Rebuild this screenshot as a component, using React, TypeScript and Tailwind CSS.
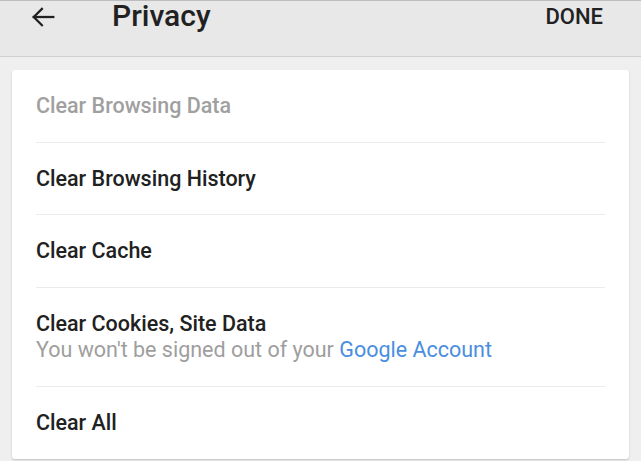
import React from "react";

function Row({ children, divider = true, h }: { children: React.ReactNode; divider?: boolean; h: string }) {
  return (
    <div className={`${h} flex flex-col justify-center mx-[24px] ${divider ? "border-b border-[#ebebeb]" : ""}`}>
      {children}
    </div>
  );
}

export default function App() {
  return (
    <div
      className="w-[641px] h-[461px] bg-[#efefef] overflow-hidden"
      style={{ fontFamily: "Roboto, 'Noto Sans', sans-serif" }}
    >
      <div className="h-[57px] bg-[#e8e8e8] border-t border-[#bdbdbd] border-b border-b-[#d0d0d0] flex items-start">
        <div className="w-[112px] flex pl-[30px] pt-[3px]">
          <svg width="26" height="26" viewBox="0 0 24 24" fill="none" stroke="#212121" strokeWidth="2.1" strokeLinecap="square">
            <path d="M21.5 12H3.5" />
            <path d="M11 4.5L3.5 12L11 19.5" />
          </svg>
        </div>
        <div className="text-[30px] font-medium text-[#212121] leading-[30px]">Privacy</div>
        <div className="ml-auto mr-[38px] text-[22px] font-medium text-[#212121] leading-none pt-[5px]">DONE</div>
      </div>
      <div className="mx-[12px] mt-[13px] h-[389px] bg-white rounded-[3px] shadow-[0_1px_2px_rgba(0,0,0,0.2)]">
        <Row h="h-[73px]">
          <div className="text-[21.5px] font-medium text-[#a0a0a0] leading-none">Clear Browsing Data</div>
        </Row>
        <Row h="h-[72px]">
          <div className="text-[21.5px] font-medium text-[#212121] leading-none">Clear Browsing History</div>
        </Row>
        <Row h="h-[73px]">
          <div className="text-[21.5px] font-medium text-[#212121] leading-none">Clear Cache</div>
        </Row>
        <Row h="h-[99px]">
          <div className="text-[21.5px] font-medium text-[#212121] leading-[26px]">Clear Cookies, Site Data</div>
          <div className="text-[21.5px] text-[#9e9e9e] leading-[26px]">
            You won't be signed out of your <span className="text-[#4a8ee0]">Google Account</span>
          </div>
        </Row>
        <Row h="h-[72px]" divider={false}>
          <div className="text-[21.5px] font-medium text-[#212121] leading-none">Clear All</div>
        </Row>
      </div>
    </div>
  );
}
